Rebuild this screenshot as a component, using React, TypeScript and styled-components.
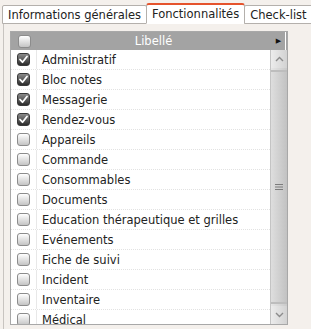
import React from "react";
import styled, { createGlobalStyle } from "styled-components";

const Global = createGlobalStyle`
  html, body { margin: 0; padding: 0; background: #f4f0ec; }
  body { font-family: "DejaVu Sans", Verdana, sans-serif; font-size: 11.5px; color: #222; }
`;

const Page = styled.div`
  width: 311px;
  height: 329px;
  overflow: hidden;
  padding-top: 3px;
  box-sizing: border-box;
`;

const TabBar = styled.div`
  display: flex;
  align-items: flex-end;
  padding-left: 2px;
  height: 21px;
  position: relative;
  z-index: 1;
`;

const Tab = styled.div<{ $active?: boolean }>`
  height: ${(p) => (p.$active ? "21px" : "19px")};
  box-sizing: border-box;
  padding: 0 5px;
  display: flex;
  align-items: center;
  background: #fff;
  border: 1px solid #b4b0ac;
  border-bottom: ${(p) => (p.$active ? "1px solid #fff" : "1px solid #b4b0ac")};
  border-top: ${(p) => (p.$active ? "2px solid #e5532c" : "1px solid #b4b0ac")};
  border-radius: ${(p) => (p.$active ? "3px 3px 0 0" : "2px 2px 0 0")};
  margin-right: -1px;
  color: #222;
  white-space: nowrap;
`;

const Panel = styled.div`
  margin: -1px 0 0 3px;
  border-left: 1px solid #c8c4c0;
  border-top: 1px solid #c8c4c0;
  padding: 7px 0 0 6px;
  height: 310px;
  box-sizing: border-box;
`;

const Grid = styled.div`
  width: 278px;
  height: 294px;
  border: 1px solid #a8a8a8;
  background: #fff;
  box-sizing: border-box;
  display: flex;
  flex-direction: column;
  overflow: hidden;
`;

const Header = styled.div`
  height: 18px;
  flex: none;
  background: #a3a3a3;
  display: grid;
  grid-template-columns: 26px 1fr 14px;
  align-items: center;
  border-right: 1px solid #a3a3a3;
`;

const HeaderLabel = styled.div`
  color: #fff;
  text-align: center;
  padding-right: 2px;
`;

const HeaderArrow = styled.div`
  height: 100%;
  display: flex;
  align-items: center;
  justify-content: center;
  border-right: 1px solid #fff;
  color: #111;
  font-size: 7px;
`;

const CheckCell = styled.div`
  display: flex;
  align-items: center;
  justify-content: center;
`;

const Body = styled.div`
  flex: 1;
  display: flex;
  min-height: 0;
`;

const List = styled.div`
  flex: 1;
  overflow: hidden;
`;

const Row = styled.div`
  height: 20px;
  display: grid;
  grid-template-columns: 26px 1fr;
  border-bottom: 1px dotted #e2e2e2;
  box-sizing: border-box;
`;

const RowCheck = styled(CheckCell)`
  border-right: 1px solid #e8e8e8;
`;

const Label = styled.div`
  display: flex;
  align-items: center;
  padding-left: 5px;
  color: #222;
  white-space: nowrap;
`;

const Box = styled.div<{ $checked?: boolean }>`
  width: 13px;
  height: 13px;
  box-sizing: border-box;
  border-radius: 3px;
  border: 1px solid ${(p) => (p.$checked ? "#3a3a3a" : "#8c8c8c")};
  background: ${(p) =>
    p.$checked
      ? "linear-gradient(#8a8a8a, #2c2c2c)"
      : "linear-gradient(#ffffff, #c4c4c4)"};
  display: flex;
  align-items: center;
  justify-content: center;
`;

const Scroll = styled.div`
  width: 16px;
  flex: none;
  display: flex;
  flex-direction: column;
  background: linear-gradient(90deg, #e6e6e6, #c9c9c9);
  border-left: 1px solid #c4c4c4;
`;

const ScrollBtn = styled.div`
  height: 18px;
  flex: none;
  display: flex;
  align-items: center;
  justify-content: center;
  background: linear-gradient(90deg, #ececec, #d2d2d2);
`;

const Thumb = styled.div`
  flex: 1;
  margin: 2px 0;
  background: linear-gradient(90deg, #dedede, #c2c2c2);
  border-top: 2px solid #bdbdbd;
  border-bottom: 2px solid #bdbdbd;
  display: flex;
  align-items: center;
  justify-content: center;
`;

const Check = () => (
  <svg width="11" height="11" viewBox="0 0 11 11">
    <path d="M2 5.5 L4.5 8.2 L9 2.5" fill="none" stroke="#fff" strokeWidth="1.8" strokeLinecap="round" strokeLinejoin="round" />
  </svg>
);

const Chevron = ({ up }: { up?: boolean }) => (
  <svg width="9" height="6" viewBox="0 0 9 6">
    <path d={up ? "M1 5 L4.5 1.5 L8 5" : "M1 1 L4.5 4.5 L8 1"} fill="none" stroke="#8c8c8c" strokeWidth="1.4" />
  </svg>
);

const Grip = () => (
  <svg width="8" height="8" viewBox="0 0 8 8">
    <path d="M0 1.5H8M0 4H8M0 6.5H8" stroke="#7c7c7c" strokeWidth="1" />
  </svg>
);

const items: [string, boolean][] = [
  ["Administratif", true],
  ["Bloc notes", true],
  ["Messagerie", true],
  ["Rendez-vous", true],
  ["Appareils", false],
  ["Commande", false],
  ["Consommables", false],
  ["Documents", false],
  ["Education thérapeutique et grilles", false],
  ["Evénements", false],
  ["Fiche de suivi", false],
  ["Incident", false],
  ["Inventaire", false],
  ["Médical", false],
];

export default function App() {
  return (
    <Page>
      <Global />
      <TabBar>
        <Tab>Informations générales</Tab>
        <Tab $active>Fonctionnalités</Tab>
        <Tab>Check-list</Tab>
      </TabBar>
      <Panel>
        <Grid>
          <Header>
            <CheckCell>
              <Box />
            </CheckCell>
            <HeaderLabel>Libellé</HeaderLabel>
            <HeaderArrow>▶</HeaderArrow>
          </Header>
          <Body>
            <List>
              {items.map(([name, checked]) => (
                <Row key={name}>
                  <RowCheck>
                    <Box $checked={checked}>{checked && <Check />}</Box>
                  </RowCheck>
                  <Label>{name}</Label>
                </Row>
              ))}
            </List>
            <Scroll>
              <ScrollBtn>
                <Chevron up />
              </ScrollBtn>
              <Thumb>
                <Grip />
              </Thumb>
              <ScrollBtn>
                <Chevron />
              </ScrollBtn>
            </Scroll>
          </Body>
        </Grid>
      </Panel>
    </Page>
  );
}
